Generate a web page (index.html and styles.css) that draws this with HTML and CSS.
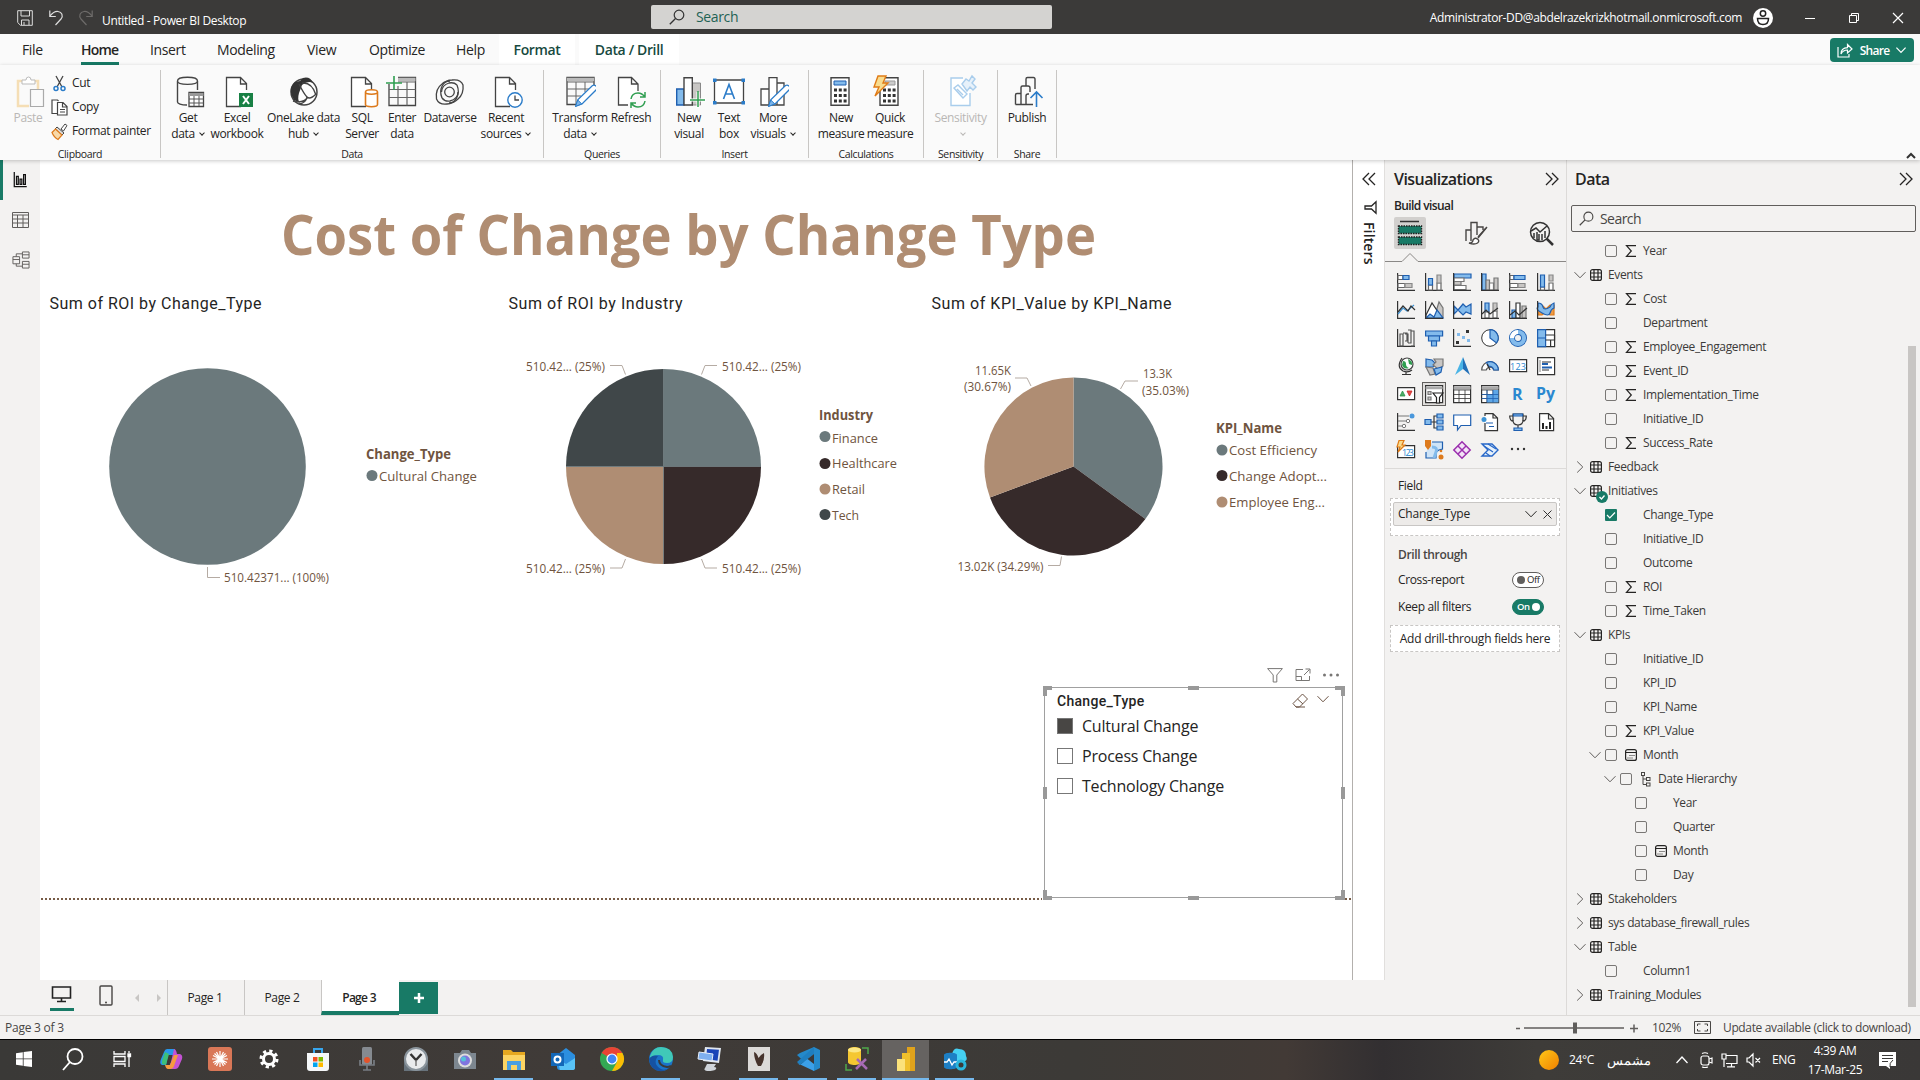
FILE: index.html
```html
<!DOCTYPE html>
<html lang="en">
<head>
<meta charset="utf-8">
<title>Untitled - Power BI Desktop</title>
<link rel="stylesheet" href="styles.css">
</head>
<body>
<svg class="defs" aria-hidden="true">
  <symbol id="chev-d" viewBox="0 0 12 12"><path d="M.5 3.2 6 8.8l5.500-5.600" fill="none" stroke="currentColor"/></symbol>
  <symbol id="chev-r" viewBox="0 0 12 12"><path d="M3.200.5 8.800 6l-5.600 5.500" fill="none" stroke="currentColor"/></symbol>
  <symbol id="dbl" viewBox="0 0 14 14"><path d="m1 1 6 6-6 6M7 1l6 6-6 6" fill="none" stroke="currentColor" stroke-width="1.300"/></symbol>
  <symbol id="lens" viewBox="0 0 16 16"><circle cx="10" cy="6" r="4.800" fill="none" stroke="currentColor" stroke-width="1.200"/><path d="M6.500 9.500.8 15.200" stroke="currentColor" stroke-width="1.300"/></symbol>
  <symbol id="tbl" viewBox="0 0 12 12"><g fill="none" stroke="#252423" stroke-width="1.200"><rect x=".6" y=".6" width="10.800" height="10.800" rx="2"/><path d="M.6 4h10.800M.6 8h10.800M4 .6v10.800M8 .6v10.800"/></g></symbol>
  <symbol id="sum" viewBox="0 0 12 12"><path d="M11 .6H1.500L6.300 6l-4.800 5.400H11" fill="none" stroke="#252423" stroke-width="1.200"/></symbol>
  <symbol id="cal" viewBox="0 0 12 12"><rect x=".6" y=".6" width="10.800" height="10.800" rx="2" fill="none" stroke="#252423" stroke-width="1.200"/><path d="M.6 3.500h10.800" stroke="#252423"/><path d="M4.500 6.500h5M2.500 9h5" stroke="#252423" stroke-dasharray="1 1"/></symbol>
  <symbol id="hier" viewBox="0 0 12 15"><g fill="none" stroke="#484644"><rect x="1.500" y=".5" width="3" height="3"/><rect x="6.500" y="5.500" width="3.500" height="3"/><rect x="6.500" y="11" width="3.500" height="3"/><path d="M3 3.500V12.500h3.500M3 7h3.500"/></g></symbol>
  <symbol id="doc" viewBox="0 0 32 32"><path d="M20 30.500H5.500v-29h14l6 6V14M19.500 1.500V8h6" fill="#fff" stroke="#444" stroke-width="1.300"/></symbol>
  <symbol id="pen" viewBox="0 0 32 32"><path d="m12 30 2-6.500L28.500 9.500q2-1 3.500.5t.5 3.500L18 28z" fill="#fff" stroke="#2b7cc9" stroke-width="1.300"/><path d="m11.500 30.500 2.200-6.500 4 3.800z" fill="#7cb5ea" stroke="#2b7cc9"/></symbol>
</svg>

<header class="titlebar">
  <div class="quick">
    <svg width="16" height="16" viewBox="0 0 16 16" fill="none" stroke="#ddd"><path d="M1 .7h14.300v14.600H3.500L.7 12.500V.7zM4 .7V6h8.500V.7M4.500 15V10h7.500v5M7 12v3"/></svg>
    <svg width="14" height="16" viewBox="0 0 14 16" fill="none" stroke="#ddd" stroke-width="1.200"><path d="M.8.5v6h6M1 6Q5 1 9 1.500c4 .5 5.500 4.500 3 7.500l-5.500 6"/></svg>
    <svg width="14" height="16" viewBox="0 0 14 16" fill="none" stroke="#6d6b69" stroke-width="1.200"><path d="M13.200.5v6h-6M13 6Q9 1 5 1.500c-4 .5-5.500 4.500-3 7.500l5.500 6"/></svg>
  </div>
  <span class="app-title">Untitled - Power BI Desktop</span>
  <div class="top-search"><svg width="16" height="16"><use href="#lens"/></svg><span>Search</span></div>
  <div class="account">
    <span class="mail">Administrator-DD@abdelrazekrizkhotmail.onmicrosoft.com</span>
    <svg width="20" height="20" viewBox="0 0 20 20"><circle cx="10" cy="10" r="10" fill="#fff"/><g fill="none" stroke="#222" stroke-width="1.500"><circle cx="10" cy="5.500" r="2.700"/><path d="M4.500 10.500h11q0 6-5.500 6t-5.500-6z"/></g></svg>
  </div>
  <div class="win">
    <svg width="12" height="12" viewBox="0 0 12 12" stroke="#fff"><path d="M1 6.500h10"/></svg>
    <svg width="12" height="12" viewBox="0 0 12 12" stroke="#fff" fill="none"><path d="M1.500 3.500h7v7h-7zM3.500 3.500v-2h7v7h-2"/></svg>
    <svg width="12" height="12" viewBox="0 0 12 12" stroke="#fff" stroke-width="1.200"><path d="m1 1 10 10M11 1 1 11"/></svg>
  </div>
</header>

<nav class="tabs">
  <span class="t-file">File</span><span class="t-home on">Home</span><span class="t-ins">Insert</span><span class="t-mod">Modeling</span><span class="t-view">View</span><span class="t-opt">Optimize</span><span class="t-help">Help</span><span class="ctx c1">Format</span><span class="ctx c2">Data / Drill</span>
  <button class="share"><svg width="16" height="15" viewBox="0 0 16 15" fill="none" stroke="#fff" stroke-width="1.200"><path d="M1 4v10h11v-3M4 11q0-6 6.500-6.300V1.500L15 6l-4.500 4V7Q6 7 4 11z"/></svg>Share<svg width="10" height="10" viewBox="0 0 12 12"><path d="M.5 3.200 6 8.800l5.500-5.600" fill="none" stroke="#fff" stroke-width="1.500"/></svg></button>
</nav>

<section class="ribbon">
  <div class="group g-clip">
    <div class="row">
      <div class="cmd paste off"><svg class="ico" viewBox="0 0 32 32"><path d="M11 5H6v25h11M22 5h4v8" fill="none" stroke="#f5deb5" stroke-width="2.500"/><path d="M10 8V4h4q0-3 2.500-3T19 4h4v4z" fill="#fff" stroke="#bbb"/><path d="M18.500 13.500h13v17h-13z" fill="#fafafa" stroke="#aaa" stroke-width="1.200"/></svg><span>Paste</span></div>
      <div class="stack">
        <div><svg width="17" height="17" viewBox="0 0 17 17" fill="none"><path d="m5 1 6 11M12 1 6 12" stroke="#444" stroke-width="1.300"/><circle cx="5" cy="13.500" r="2" stroke="#2b7cc9" stroke-width="1.500"/><circle cx="12" cy="13.500" r="2" stroke="#2b7cc9" stroke-width="1.500"/></svg>Cut</div>
        <div><svg width="17" height="17" viewBox="0 0 17 17" fill="#fff" stroke="#444" stroke-width="1.200"><path d="M6 14.500H1V1h5.500l1 1M6.500 3.500H12L16 7.500V16H6.500zM11.500 4v4H16M9 10.500h5M9 13h5"/></svg>Copy</div>
        <div><svg width="17" height="17" viewBox="0 0 17 17"><path d="m10 6 4-5 2 1.500-3.500 5.500z" fill="#fff" stroke="#444"/><path d="m6 4 7 6-2 2-7-6z" fill="#ddd" stroke="#444"/><path d="m4.500 6 6.500 6-4 4.500q-4-2-6-7z" fill="#f8d9a8" stroke="#dd7a1c" stroke-width="1.200"/></svg>Format painter</div>
      </div>
    </div>
    <footer>Clipboard</footer>
  </div>
  <div class="group g-data">
    <div class="row">
      <div class="cmd w40"><svg class="ico" viewBox="0 0 32 32"><path d="M15 29C9 29 5.500 27.500 5.500 26V5c0-5 20-5 20 0v9M5.500 5c0 4.500 20 4.500 20 0" fill="none" stroke="#444" stroke-width="1.400"/><path d="M17 16.500h14.500v14H17z" fill="#fff" stroke="#444" stroke-width="1.300"/><path d="M17 18.500h14.500" stroke="#999" stroke-width="3"/><path d="M17 23h14.500M17 27h14.500M22 20v10M27 20v10" stroke="#555"/></svg><span>Get<br>data<i class="dn"></i></span></div>
      <div class="cmd w58"><svg class="ico" viewBox="0 0 32 32"><use href="#doc"/><path d="M18 17h14v14H18z" fill="#188044"/><path d="m22 20 6 8M28 20l-6 8" stroke="#fff" stroke-width="2"/></svg><span>Excel<br>workbook</span></div>
      <div class="cmd w75"><svg class="ico" viewBox="0 0 32 32"><circle cx="16" cy="16" r="13" fill="#fff" stroke="#444" stroke-width="1.500"/><path d="M6 24Q-1 13 7 6l5-1 3-3q7-2 10 5-5-3-11 2l-3 8q-2 7 1 10z" fill="#333"/><path d="M11 8q5 10 8 13t9-3M5 25q10 3 15-4M19 21q-1 6-8 7M14 7q10-1 14 12" fill="none" stroke="#444" stroke-width="1.400"/></svg><span>OneLake data<br>hub<i class="dn"></i></span></div>
      <div class="cmd w42"><svg class="ico" viewBox="0 0 32 32"><use href="#doc"/><path d="M19.500 16v12.500c0 3 12 3 12 0V16c0-3-12-3-12 0s12 3 12 0" fill="#fff" stroke="#dd7a1c" stroke-width="1.600"/></svg><span>SQL<br>Server</span></div>
      <div class="cmd w38"><svg class="ico" viewBox="0 0 32 32"><path d="M3 8v21.500h26.500v-28H12" fill="none" stroke="#444" stroke-width="1.300"/><path d="M12 3.500h17.500" stroke="#bbb" stroke-width="3.500"/><path d="M12 6h17.500M3 13.500h26.500M3 21.500h26.500M12 10v19.500M21 6v23.500" stroke="#666" stroke-width="1.200" fill="none"/><path d="M8 0v14M0 7h16" stroke="#2f9e50" stroke-width="1.600"/></svg><span>Enter<br>data</span></div>
      <div class="cmd w58"><svg class="ico" viewBox="0 0 32 32" fill="none" stroke="#444" stroke-width="1.300"><circle cx="15.500" cy="16" r="4.800"/><path d="M8 22C4 12 10 4 18 4q9-1 11 5 1 9-5 14-4 4-9 4"/><path d="M23 9c4 10-2 19-10 19Q5 29 2.500 23 1 13 8 8q3-3 8-3"/><path d="M8 22q3 4 8 3 8-2 8-9M23 9q-3-3-8-2-7 2-7.500 9"/></svg><span>Dataverse</span></div>
      <div class="cmd w54"><svg class="ico" viewBox="0 0 32 32"><use href="#doc"/><circle cx="25" cy="24" r="7.200" fill="#fff" stroke="#2b7cc9" stroke-width="1.400"/><path d="M25 19.500V24h4" fill="none" stroke="#444" stroke-width="1.300"/></svg><span>Recent<br>sources<i class="dn"></i></span></div>
    </div>
    <footer>Data</footer>
  </div>
  <div class="group g-quer">
    <div class="row">
      <div class="cmd w54"><svg class="ico" viewBox="0 0 32 32"><path d="M13 28.500H3v-27h27V11" fill="none" stroke="#444" stroke-width="1.300"/><path d="M3 3.500h27" stroke="#bbb" stroke-width="3.500"/><path d="M3 6h27M3 13h22M3 20h14M12 6v22M21 6v10" fill="none" stroke="#666"/><use href="#pen" width="32" height="32"/></svg><span>Transform<br>data<i class="dn"></i></span></div>
      <div class="cmd w48"><svg class="ico" viewBox="0 0 32 32"><path d="M13 29H3.500V1.500h13L23 8v7M16.500 1.500V8H23" fill="#fff" stroke="#444" stroke-width="1.300"/><path d="M16 23q1-6 7-6 4 0 7 4M30 16v5h-5M30 25q-1 6-7 6-4 0-7-4M16 32v-5h5" fill="none" stroke="#2f9e50" stroke-width="1.500"/></svg><span>Refresh</span></div>
    </div>
    <footer>Queries</footer>
  </div>
  <div class="group g-ins">
    <div class="row">
      <div class="cmd w36"><svg class="ico" viewBox="0 0 32 32"><path d="M3.700 13H11v16H3.700z" fill="#83bbec" stroke="#1f5fb0" stroke-width="1.400"/><path d="M19 7h8.500v22H19z" fill="#c8c6c4" stroke="#888"/><path d="M11 1.700h8.300V29H11z" fill="#fff" stroke="#444" stroke-width="1.400"/><path d="M25 16v16M17 24h16" stroke="#fff" stroke-width="3"/><path d="M25 15v16M17 24h15" stroke="#2f9e50" stroke-width="1.500"/></svg><span>New<br>visual</span></div>
      <div class="cmd w44"><svg class="ico" viewBox="0 0 32 32"><path d="M1.500 4h29v23h-29z" fill="#fff" stroke="#444" stroke-width="1.300"/><path d="M0 2.500h3.500V6H0zM28.500 2.500H32V6h-3.500zM0 25h3.500v3.500H0zM28.500 25H32v3.500h-3.500z" fill="#2b7cc9"/><path d="M10.500 23 16 8.500 21.500 23M12.300 18h7.400" fill="none" stroke="#2b7cc9" stroke-width="1.600"/></svg><span>Text<br>box</span></div>
      <div class="cmd w44"><svg class="ico" viewBox="0 0 32 32"><path d="M4 13h8v16H4zM20 7h7v22h-7zM12 1.700h8V29h-8z" fill="#fff" stroke="#444" stroke-width="1.300"/><use href="#pen" width="32" height="32"/></svg><span>More<br>visuals<i class="dn"></i></span></div>
    </div>
    <footer>Insert</footer>
  </div>
  <div class="group g-calc">
    <div class="row">
      <div class="cmd w48"><svg class="ico" viewBox="0 0 32 32"><path d="M6 1.700h18v27.500H6z" fill="#fff" stroke="#444" stroke-width="1.400"/><path d="M9 5h12v4H9z" fill="#83bbec" stroke="#1f5fb0"/><path d="M9 14h13M9 19.500h13M9 25h13" stroke="#333" stroke-width="3" stroke-dasharray="3 1.800"/></svg><span>New<br>measure</span></div>
      <div class="cmd w50"><svg class="ico" viewBox="0 0 32 32"><path d="M6 1.700h18v27.500H6z" fill="#fff" stroke="#444" stroke-width="1.400"/><path d="M11 5h10v4H11z" fill="#ccc" stroke="#999"/><path d="M9 14h13M9 19.500h13M9 25h13" stroke="#333" stroke-width="3" stroke-dasharray="3 1.800"/><path d="M4 0h8L9 7h5L1 20l4-9H0z" fill="#f8dc8f" stroke="#e07b16" stroke-width="1.400"/></svg><span>Quick<br>measure</span></div>
    </div>
    <footer>Calculations</footer>
  </div>
  <div class="group g-sens">
    <div class="row">
      <div class="cmd w74 off"><svg class="ico" viewBox="0 0 32 32" fill="none" stroke="#a9cdec" stroke-width="1.400"><path d="M18 2H6v27.500h19V17" fill="#fff"/><path d="m9 12 4-3 9 9-4 4zM12 13l6 6"/><path d="m17 8 4-5 3 2 3-5 3 3-3 4 4 4-3 3-3-3-3 4z" fill="#e7f1fa"/></svg><span>Sensitivity<br><i class="dn"></i></span></div>
    </div>
    <footer>Sensitivity</footer>
  </div>
  <div class="group g-share">
    <div class="row">
      <div class="cmd w60"><svg class="ico" viewBox="0 0 32 32" fill="none" stroke="#444" stroke-width="1.400"><path d="M24 13V3q0-1.500-1.500-1.500h-6Q15 1.500 15 3v7M4.500 28.500V19q0-1.500 1.500-1.500h4M4.500 28.500H22M10 28V11.500q0-1.500 1.500-1.500H17q2 0 2 2v4M15 28v-8q0-2 2-2h1"/><path d="M25.500 31V16M19.500 22l6-6 6 6" stroke="#2b7cc9" stroke-width="1.600"/></svg><span>Publish</span></div>
    </div>
    <footer>Share</footer>
  </div>
  <svg class="collapse" width="10" height="8" viewBox="0 0 10 8"><path d="m1 6 4-4 4 4" fill="none" stroke="#333" stroke-width="2"/></svg>
</section>

<main class="work">
  <div class="left">
    <div class="top">
      <aside class="views">
        <span class="v on"><svg width="15" height="16" viewBox="0 0 16 18" fill="none" stroke="#111" stroke-width="1.400"><path d="M1 0v16.500h14M3.500 5h2v9h-2zM7.500 8h2v6h-2zM11.500 3h2v11h-2z"/></svg></span>
        <span class="v"><svg width="17" height="16" viewBox="0 0 17 16" fill="none" stroke="#605e5c"><path d="M.5.5h16v15H.5zM.5 3h16M.5 7h16M.5 11h16M5.500 3v12.500M11 3v12.500"/></svg></span>
        <span class="v"><svg width="18" height="18" viewBox="0 0 18 19" fill="none" stroke="#605e5c"><path d="M.5 6h7v7.500h-7zM.5 9h7M10.500 1h7v6.500h-7zM10.500 4h7M10.500 11h7v7h-7zM10.500 14h7M4 6V3h6.500M4 13.500V16h6.500"/></svg></span>
      </aside>
      <section class="canvas">
        <h1><svg width="830" height="80" viewBox="0 0 830 80"><text x="0" y="55" textLength="815" lengthAdjust="spacingAndGlyphs">Cost of Change by Change Type</text></svg></h1>
        <div class="charts">
          <svg width="460" height="320" viewBox="40 285 460 320">
            <text class="ct" x="49.500" y="309" textLength="212">Sum of ROI by Change_Type</text>
            <circle cx="207.500" cy="466.500" r="98.300" fill="#6b797c"/>
            <path class="lead" d="M207.500 567v10.500H220"/>
            <text x="224" y="582" textLength="105" lengthAdjust="spacingAndGlyphs">510.42371... (100%)</text>
            <text class="lt" x="366" y="459" textLength="85" lengthAdjust="spacingAndGlyphs">Change_Type</text>
            <circle cx="372" cy="475.500" r="5.500" fill="#6b797c"/><text class="li" x="379" y="481" textLength="98" lengthAdjust="spacingAndGlyphs">Cultural Change</text>
          </svg>
          <svg width="425" height="320" viewBox="500 285 425 320">
            <text class="ct" x="508.500" y="309" textLength="174">Sum of ROI by Industry</text>
            <path d="M663.500 466.500V369a97.500 97.500 0 0 1 97.500 97.500z" fill="#6b797c"/>
            <path d="M663.500 466.500H761a97.500 97.500 0 0 1-97.500 97.500z" fill="#362a2a"/>
            <path d="M663.500 466.500V564a97.500 97.500 0 0 1-97.500-97.500z" fill="#af8d73"/>
            <path d="M663.500 466.500H566a97.500 97.500 0 0 1 97.500-97.500z" fill="#404749"/>
            <path d="M566 466.500h195M663.500 369v195" stroke="#6b797c" stroke-width=".8"/>
            <path class="lead" d="M610 365.500h12l3.500 9M717 365.500h-12l-3.500 9M610 568h12l3.500-9M717 568h-12l-3.500-9"/>
            <text x="526" y="371" textLength="79" lengthAdjust="spacingAndGlyphs">510.42... (25%)</text>
            <text x="722" y="371" textLength="79" lengthAdjust="spacingAndGlyphs">510.42... (25%)</text>
            <text x="526" y="573" textLength="79" lengthAdjust="spacingAndGlyphs">510.42... (25%)</text>
            <text x="722" y="573" textLength="79" lengthAdjust="spacingAndGlyphs">510.42... (25%)</text>
            <text class="lt" x="819" y="420" textLength="54" lengthAdjust="spacingAndGlyphs">Industry</text>
            <circle cx="825" cy="436.500" r="5.500" fill="#6b797c"/><text class="li" x="832" y="443" textLength="46" lengthAdjust="spacingAndGlyphs">Finance</text>
            <circle cx="825" cy="463.500" r="5.500" fill="#362a2a"/><text class="li" x="832" y="468" textLength="65" lengthAdjust="spacingAndGlyphs">Healthcare</text>
            <circle cx="825" cy="489" r="5.500" fill="#af8d73"/><text class="li" x="832" y="494" textLength="33" lengthAdjust="spacingAndGlyphs">Retail</text>
            <circle cx="825" cy="514.500" r="5.500" fill="#404749"/><text class="li" x="832" y="520" textLength="27" lengthAdjust="spacingAndGlyphs">Tech</text>
          </svg>
          <svg width="427" height="320" viewBox="925 285 427 320">
            <text class="ct" x="931.500" y="309" textLength="240">Sum of KPI_Value by KPI_Name</text>
            <path d="M1073.500 466.500V377.500A89 89 0 0 1 1145.400 519z" fill="#6b797c"/>
            <path d="M1073.500 466.500 1145.400 519A89 89 0 0 1 990 497.500z" fill="#362a2a"/>
            <path d="M1073.500 466.500 990 497.500A89 89 0 0 1 1073.500 377.500z" fill="#af8d73"/>
            <path class="lead" d="M1015 378h12l4 8M1138 381h-13l-4.500 8M1048 565.500h12l1.500-9"/>
            <text x="975" y="375" textLength="36" lengthAdjust="spacingAndGlyphs">11.65K</text>
            <text x="964" y="391" textLength="47" lengthAdjust="spacingAndGlyphs">(30.67%)</text>
            <text x="1143" y="378" textLength="29" lengthAdjust="spacingAndGlyphs">13.3K</text>
            <text x="1142" y="395" textLength="47" lengthAdjust="spacingAndGlyphs">(35.03%)</text>
            <text x="957.500" y="571" textLength="86" lengthAdjust="spacingAndGlyphs">13.02K (34.29%)</text>
            <text class="lt" x="1216" y="433" textLength="66" lengthAdjust="spacingAndGlyphs">KPI_Name</text>
            <circle cx="1222" cy="450" r="5.500" fill="#6b797c"/><text class="li" x="1229" y="455" textLength="88" lengthAdjust="spacingAndGlyphs">Cost Efficiency</text>
            <circle cx="1222" cy="475.500" r="5.500" fill="#362a2a"/><text class="li" x="1229" y="481" textLength="98" lengthAdjust="spacingAndGlyphs">Change Adopt...</text>
            <circle cx="1222" cy="502" r="5.500" fill="#af8d73"/><text class="li" x="1229" y="507" textLength="96" lengthAdjust="spacingAndGlyphs">Employee Eng...</text>
          </svg>
        </div>
        <div class="page-edge"></div>
        <div class="slicer">
          <div class="vis-tools">
            <svg width="16" height="15" viewBox="0 0 16 15"><path d="M.6.6h14.800L9.800 7v7H6.200V7z"/></svg>
            <svg width="16" height="14" viewBox="0 0 16 14"><path d="M8 1.500H1v11h13.500V8M1 8.500h5.500v4M9 7l5.500-5.500M10.500 1h4.500v4.500"/></svg>
            <svg width="16" height="14" viewBox="0 0 16 14" class="dots"><circle cx="1.500" cy="7" r="1.500"/><circle cx="8" cy="7" r="1.500"/><circle cx="14.500" cy="7" r="1.500"/></svg>
          </div>
          <svg class="handles" width="303" height="214" viewBox="0 0 303 214"><path d="M2.500 1.500h298v210H2.500z" fill="none" stroke="#a0a0a0"/><path d="M10 2H3v8M293 2h8v8M10 212H3v-8M293 212h8v-8M146 2h11M146 212h11M3 101v12M301 101v12" fill="none" stroke="#999" stroke-width="4"/></svg>
          <div class="sl-head"><b>Change_Type</b>
            <svg width="17" height="15" viewBox="0 0 17 15" fill="none" stroke="#6b5344"><path d="M1 10.500 10.500 1 15.500 6 7.500 14H4zM5.500 6l5.500 5M4 14h9"/></svg>
            <svg width="12" height="12" class="slc"><use href="#chev-d"/></svg>
          </div>
          <div class="sl-row"><i class="full"></i>Cultural Change</div>
          <div class="sl-row"><i></i>Process Change</div>
          <div class="sl-row"><i></i>Technology Change</div>
        </div>
      </section>
      <aside class="filters">
        <svg width="14" height="14" class="flip"><use href="#dbl"/></svg>
        <svg width="13" height="13" viewBox="0 0 13 13"><path d="M12 .8v11.400L7.500 8H1V5h6.500z" fill="none" stroke="#252423" stroke-width="1.300"/></svg>
        <b>Filters</b>
      </aside>
    </div>
    <div class="pages">
      <span class="desk"><svg width="22" height="18" viewBox="0 0 22 18"><path d="M1.500 1h18v11h-18zM10.500 12v3M6 15.500h9" fill="none" stroke="#222" stroke-width="1.600"/></svg></span>
      <svg class="phone" width="14" height="21" viewBox="0 0 14 21"><rect x="1" y="1" width="12" height="19" rx="1" fill="none" stroke="#484644" stroke-width="1.400"/><circle cx="7" cy="17.500" r="1" fill="#484644"/></svg>
      <svg class="arrows" width="32" height="10" viewBox="0 0 32 10" fill="#c8c6c4"><path d="M5 1v8L1 5zM23 1v8l4-4z"/></svg>
      <span class="pg">Page 1</span><span class="pg">Page 2</span><span class="pg on">Page 3</span>
      <span class="plus"><svg width="12" height="12"><path d="M6 1v10M1 6h10" stroke="#fff" stroke-width="2.500"/></svg></span>
    </div>
  </div>

  <aside class="viz">
    <h2>Visualizations<svg width="14" height="14"><use href="#dbl"/></svg></h2>
    <h3>Build visual</h3>
    <div class="modes">
      <span class="m on"><svg width="26" height="26" viewBox="0 0 26 26"><path d="M3 1.500h19" stroke="#333" stroke-width="1.500"/><path d="M1.500 6h23v7.500h-23zM1.500 17h23v7.500h-23z" fill="#187a66"/><path d="M1.500 6h23v7.500h-23zM1.500 17h23v7.500h-23z" fill="none" stroke="#222" stroke-width="1.400" stroke-dasharray="1.500 1"/></svg></span>
      <span class="m"><svg width="24" height="24" viewBox="0 0 24 24" fill="none" stroke="#484644" stroke-width="1.400"><path d="M2 20V9h5v11M7 9V1.500h6V14M13 6h6v3M23 6 14 17"/><path d="m22 7-8 9M5 22q4 0 4-3 2-3 4.500-1t0 4q-3 2-8.500 0z" fill="#fff"/></svg></span>
      <span class="m"><svg width="25" height="25" viewBox="0 0 25 25" fill="none" stroke="#333" stroke-width="1.500"><circle cx="11" cy="11" r="9.500"/><path d="m17.500 17.500 6.500 6.500" stroke-width="2.500"/><path d="m2 10 5-3 4 4 7-6M5 12v5M8 11v8h2v-6M13 13v6M16 10v7"/></svg></span>
    </div>
    <svg class="notch" width="181" height="10" viewBox="0 0 181 10"><path d="M0 9.500h17L25 1.500l8 8h148" fill="none" stroke="#8a8886"/></svg>
    <div class="gallery" id="gallery"></div>
    <div class="wells">
      <label>Field</label>
      <div class="drop"><div class="chip">Change_Type<svg width="12" height="12"><use href="#chev-d"/></svg><svg width="9" height="9" viewBox="0 0 9 9"><path d="m.5.5 8 8M8.500.5l-8 8" stroke="#333"/></svg></div></div>
      <label class="dt">Drill through</label>
      <div class="opt">Cross-report<span class="tog"><i></i>Off</span></div>
      <div class="opt">Keep all filters<span class="tog on">On<i></i></span></div>
      <div class="add">Add drill-through fields here</div>
    </div>
  </aside>

  <aside class="data">
    <h2>Data<svg width="14" height="14"><use href="#dbl"/></svg></h2>
    <div class="dsearch"><svg width="15" height="15" viewBox="0 0 16 16"><use href="#lens"/></svg>Search</div>
    <div class="tree" id="tree"></div>
    <div class="thumb"></div>
  </aside>
</main>

<div class="status">
  <span class="pn">Page 3 of 3</span>
  <svg width="130" height="14" viewBox="0 0 130 14"><path d="M1 7.500h4M9 7h100M115 7.500h8M119 3.500v8" stroke="#605e5c" stroke-width="1.500"/><path d="M58 1.500h4v11h-4z" fill="#605e5c"/></svg>
  <span class="pct">102%</span>
  <svg width="17" height="13" viewBox="0 0 17 13" fill="none" stroke="#484644"><path d="M.5.5h16v12H.5zM3.500 5V3h3M10.500 3h3v2M3.500 8v2h3M10.500 10h3V8"/></svg>
  <span class="upd">Update available (click to download)</span>
</div>

<footer class="taskbar">
  <div class="apps">
    <span><svg viewBox="0 0 24 24" fill="#fff"><path d="M4 6.200l6.800-1v6.300H4zM11.600 5 20 4v7.500h-8.400zM4 12.300h6.800v6.400L4 17.800zM11.600 12.300H20V20l-8.400-1.100z"/></svg></span>
    <span><svg viewBox="0 0 24 24" fill="none" stroke="#fff" stroke-width="1.800"><circle cx="14" cy="9.500" r="7.500"/><path d="m9 15-7 8"/></svg></span>
    <span><svg viewBox="0 0 24 24" fill="none" stroke="#fff" stroke-width="1.300"><path d="M4 4v3h11V4M4 20v-3h11v3M4 9.500h11v5H4zM19 4v2M19 10v10"/><path d="M18 7h2.500v2.500H18z" fill="#fff"/></svg></span>
    <span><svg viewBox="0 0 24 24"><path d="M8 2h7l2 6H9L7 18H3q-3-1-1-6L5 5q1-3 3-3z" fill="#2797ea"/><path d="M3 14 6 5l4 2-3 11-4-1z" fill="#3dbf79"/><path d="M15 2q2 0 3 5h3q3 1 2 5l-3 7q-1 3-4 3H9l3-7z" fill="#c452d4"/><path d="M9 22q-2 0-3-4h5l4-10h4l-4 11q-1 3-4 3z" fill="#f69b3f"/></svg></span>
    <span><svg viewBox="0 0 24 24"><rect width="24" height="24" rx="3" fill="#d97757"/><path d="M12 4v16M4 12h16M6.500 6.500l11 11M17.500 6.500l-11 11M8.500 5l7 14M15.500 5l-7 14M5 8.500l14 7M5 15.500l14-7" stroke="#fff" stroke-width="1.200"/></svg></span>
    <span><svg viewBox="0 0 24 24" fill="none" stroke="#fff"><circle cx="12" cy="12" r="5.500" stroke-width="3"/><circle cx="12" cy="12" r="8" stroke-width="3" stroke-dasharray="3.200 3.080"/></svg></span>
    <span><svg viewBox="0 0 24 24"><path d="M8 6V2h8v4" fill="none" stroke="#38a6ee" stroke-width="2"/><path d="M1 6h22v15q0 3-3 3H4q-3 0-3-3z" fill="#f5f7f9"/><path d="M7 10h4.500v4.500H7z" fill="#f25022"/><path d="M12.500 10H17v4.500h-4.500z" fill="#7fba00"/><path d="M7 15.500h4.500V20H7z" fill="#00a4ef"/><path d="M12.500 15.500H17V20h-4.500z" fill="#ffb900"/></svg></span>
    <span><svg viewBox="0 0 24 24"><rect x="7" y="0" width="10" height="18" rx="1.500" fill="#858a90"/><path d="M5 13v5h14v-5M12 18v5M8 23h8" fill="none" stroke="#777c82" stroke-width="1.700"/><circle cx="12" cy="13" r="3" fill="#e4532a"/></svg></span>
    <span><svg viewBox="0 0 24 24"><path d="M0 13h24v11H0z" fill="#68737c"/><circle cx="12" cy="12" r="11" fill="#e9ebed" stroke="#8a949c" stroke-width="2"/><path d="m6.500 7 5.500 6 5.500-6" fill="none" stroke="#333" stroke-width="2.500"/><path d="M12 13v6" stroke="#777" stroke-width="1.500"/></svg></span>
    <span><svg viewBox="0 0 24 24"><path d="M1 6h6l2-3h7l2 3h5v16H1z" fill="#7d8790"/><circle cx="12" cy="13.500" r="7" fill="#ddd"/><circle cx="12" cy="13.500" r="5" fill="#8074df"/><circle cx="10.500" cy="12" r="2.500" fill="#55c1d8"/></svg></span>
    <span class="run"><svg viewBox="0 0 24 24"><path d="M1 3h8l2 2h12v18H1z" fill="#e6a820"/><path d="M1 8h22v15H1z" fill="#fcd462"/><path d="M5 23v-9h14v9h-4v-5H9v5z" fill="#4b9fe0"/></svg></span>
    <span><svg viewBox="0 0 24 24"><path d="m6 8 9-7 9 7v12q0 3-3 3H9q-3 0-3-3z" fill="#2b8fe0"/><path d="m6 11 9 6 9-6v10q0 2-3 2H9z" fill="#59c3f7"/><path d="M0 6h13v13H0z" fill="#1267b8"/><circle cx="6.500" cy="12.500" r="3" fill="none" stroke="#fff" stroke-width="2"/></svg></span>
    <span><svg viewBox="0 0 24 24"><circle cx="12" cy="12" r="12" fill="#34a853"/><path d="M12 12 1.600 6A12 12 0 0 1 22.400 6z" fill="#ea4335"/><path d="M22.400 6A12 12 0 0 1 12 24l5-9V6z" fill="#fbbc04"/><circle cx="12" cy="12" r="5.600" fill="#fff"/><circle cx="12" cy="12" r="4.400" fill="#4285f4"/></svg></span>
    <span class="run"><svg viewBox="0 0 24 24"><circle cx="12" cy="12" r="12" fill="#1b74c9"/><path d="M1 9Q4 0 12 0q11 0 12 10 0 6-6 6-5 0-4-3 1-5-5-5-4 0-8 4z" fill="#40c8b8"/><path d="M9 9q-6 8 3 13 4 2 9-2-5 5-11 4Q1 22 0 12q3-5 9-3z" fill="#1552a2"/><path d="M10 13q0 6 8 7 2 0 4-1" fill="none" stroke="#3b3a39" stroke-width="2"/></svg></span>
    <span><svg viewBox="0 0 24 24"><path d="m7 0 16 1-2 15-16-2z" fill="#dfe6ef"/><path d="m9 2 12 .8-1.500 11L8 12z" fill="#1b45b8"/><path d="m1 5 14 2-1 7-14-2z" fill="#7fb0f0" stroke="#e8eef8"/><path d="M9 17h9l-2 3q3 0 2 2t-9 2q-4-1-2-3z" fill="#cfd4da"/></svg></span>
    <span class="run"><svg viewBox="0 0 24 24"><path d="M1 0h22v24H1z" fill="#dcdad8"/><path d="M7 5q3 1 4.500 6L14 8l3-2q1 7-3 13h-3Q7 12 7 5z" fill="#46332c"/></svg></span>
    <span class="run"><svg viewBox="0 0 24 24"><path d="m18 0 6 3v18l-6 3L1 8l3-2z" fill="#2489ca"/><path d="M18 0v24L1 16l3 2L18 6z" fill="#3ba0e8"/><path d="M18 0 1 15l3 3L18 7z" fill="#1f7fc0"/><path d="M18 7v10l-6.500-5z" fill="#3a3837"/></svg></span>
    <span class="run"><svg viewBox="0 0 24 24"><path d="M3 3c0-4 13-4 13 0v12c0 4-13 4-13 0z" fill="#f5c731"/><ellipse cx="9.500" cy="3" rx="6.500" ry="2.500" fill="#fce785"/><path d="M17 1h6v6M1 17v6h6" fill="none" stroke="#4fa84b" stroke-width="1.500"/><path d="m12 12 10 10M21 12 11 22" stroke="#a76bb5" stroke-width="2.500"/></svg></span>
    <span class="run act"><svg viewBox="0 0 24 24"><path d="M13 0h8v24h-8z" fill="#e0a21b"/><path d="M8 6h8v18H8z" fill="#f0c02c"/><path d="M3 12h8v12H3z" fill="#fbe27a"/></svg></span>
    <span class="run"><svg viewBox="0 0 24 24"><path d="M9 7Q11 0 16 2q7 0 7 7 3 5-4 6h-6z" fill="#45d0f2"/><path d="M1 8c0-3 13-3 13 0v12c0 3-13 3-13 0z" fill="#1d7fc4"/><path d="M1 15h3l2-3 3 6 2-3h3" fill="none" stroke="#fff" stroke-width="1.300"/><circle cx="18" cy="18" r="4" fill="none" stroke="#2ab7dd" stroke-width="3"/></svg></span>
  </div>
  <div class="tray">
    <svg width="20" height="20"><defs><linearGradient id="sun" x2="1" y2="1"><stop stop-color="#ffc818"/><stop offset="1" stop-color="#f08000"/></linearGradient></defs><circle cx="10" cy="10" r="10" fill="url(#sun)"/></svg>
    <span class="temp">24°C</span><span class="ar" lang="ar">مشمس</span>
    <svg class="k1" width="12" height="12" viewBox="0 0 12 12"><path d="m.5 9 5.500-6 5.500 6" fill="none" stroke="#fff" stroke-width="1.300"/></svg>
    <svg class="k2" width="13" height="16" viewBox="0 0 13 16" fill="none" stroke="#fff" stroke-width="1.200"><rect x="1" y="4" width="8" height="9" rx="2"/><path d="m9 7 3-1v5l-3-1M2 1.500q3-1.500 6 0M2 15q3 1 6 0"/></svg>
    <svg class="k3" width="17" height="15" viewBox="0 0 17 15" fill="none" stroke="#fff" stroke-width="1.200"><path d="M5 2.500h11v8H5M10.500 10.500v3M6 13.800h8M1 1h4v5H1zM3 6v8"/></svg>
    <svg class="k4" width="15" height="14" viewBox="0 0 15 14" fill="none" stroke="#fff" stroke-width="1.200"><path d="M1 5h2l4-4v12L3 9H1zM9.500 5l4.500 4.500M14 5 9.500 9.500"/></svg>
    <span class="eng">ENG</span>
    <span class="clock">4:39 AM<br>17-Mar-25</span>
    <svg class="k5" width="17" height="17" viewBox="0 0 17 17"><path d="M0 0h17v14h-6v3l-4-3H0z" fill="#fff"/><path d="M3 3.500h11M3 6.500h11M3 9.500h6" stroke="#3b3a39" stroke-width="1.200"/><path d="M11 15q-1-4 3-7" stroke="#3b3a39" fill="none"/></svg>
  </div>
</footer>
<script src="script.js"></script>
</body>
</html>
```
FILE: styles.css
```css
* { box-sizing: border-box; }
body {
  margin: 0; width: 1920px; height: 1080px; overflow: hidden;
  display: flex; flex-direction: column;
  font: 12px/16px "Open Sans", "Noto Sans", sans-serif;
  letter-spacing: -0.03em; color: #252423; background: #f3f2f1;
}
svg { display: block; flex: none; overflow: visible; }
.defs { position: absolute; width: 0; height: 0; }
h1, h2, h3 { margin: 0; }

.titlebar { flex: none; height: 34px; background: #3b3a39; color: #fff; display: flex; align-items: center; }
.quick { display: flex; gap: 16px; padding: 1px 9px 0 17px; }
.app-title { width: 549px; padding-top: 7px; white-space: nowrap; }
.top-search { flex: none; width: 401px; height: 24px; margin-top: -1px; background: #d4d3d1; border-radius: 2px; display: flex; align-items: center; gap: 11px; padding-left: 18px; color: #1f6254; font-size: 14px; }
.top-search svg { color: #333; }
.account { display: flex; align-items: center; justify-content: flex-end; gap: 11px; width: 721px; padding-top: 1px; }
.win { display: flex; gap: 32px; padding: 1px 0 0 31px; }

.tabs { flex: none; height: 31px; background: #fafafa; display: flex; font-size: 14px; line-height: 32px; white-space: nowrap; }
.tabs > span { flex: none; }
.t-file { width: 59px; margin-left: 22px; }
.t-home { width: 38px; margin-right: 31px; font-weight: 600; border-bottom: 3px solid #187a66; letter-spacing: -.06em; }
.t-ins { width: 67px; }
.t-mod { width: 90px; }
.t-view { width: 62px; }
.t-opt { width: 87px; }
.t-help { width: 43px; }
.ctx { background: #fff; font-weight: 600; color: #174a40; text-align: center; }
.c1 { width: 76px; margin-right: 4px; }
.c2 { width: 100px; }
.share { margin: 4px 6px 0 auto; width: 84px; height: 24px; border: 0; border-radius: 4px; background: #187a66; color: #fff; font: 600 12px "Open Sans", sans-serif; letter-spacing: -.06em; display: flex; align-items: center; padding: 0 8px 0 7px; justify-content: space-between; }

.ribbon { flex: none; height: 95px; background: #fafafa; display: flex; padding-top: 5px; position: relative; z-index: 2; box-shadow: 0 1px 4px rgba(0,0,0,.22); }
.group { height: 88px; border-right: 1px solid #c8c6c4; display: flex; flex-direction: column; justify-content: space-between; }
.group footer { text-align: center; font-size: 10.500px; line-height: 12px; height: 10px; }
.row { display: flex; justify-content: center; padding-top: 6px; }
.g-clip { width: 161px; } .g-data { width: 383px; } .g-quer { width: 117px; } .g-ins { width: 148px; }
.g-calc { width: 115px; } .g-sens { width: 74px; } .g-share { width: 59px; }
.g-data .row { justify-content: flex-start; padding-left: 7px; }
.g-quer .row { justify-content: flex-start; padding-left: 9px; }
.g-ins .row { justify-content: flex-start; padding-left: 10px; }
.cmd { flex: none; display: flex; flex-direction: column; align-items: center; gap: 2px; text-align: center; white-space: nowrap; }
.ico { width: 32px; height: 32px; }
.cmd.off { color: #b9b7b5; }
.w36 { width: 36px; } .w38 { width: 38px; } .w40 { width: 40px; } .w42 { width: 42px; } .w44 { width: 44px; }
.w48 { width: 48px; } .w50 { width: 50px; } .w54 { width: 54px; } .w58 { width: 58px; } .w60 { width: 60px; }
.w74 { width: 74px; } .w75 { width: 75px; }
.dn { display: inline-block; width: 4px; height: 4px; margin: 0 1px 3px 5px; border: solid currentColor; border-width: 0 1.500px 1.500px 0; transform: rotate(45deg); }
.g-clip .row { justify-content: flex-start; }
.paste { width: 50px; padding-left: 6px; }
.stack { display: flex; flex-direction: column; gap: 8px; margin-top: -1px; }
.stack div { display: flex; align-items: center; gap: 4px; height: 16px; padding-left: 1px; white-space: nowrap; }
.collapse { margin: 82px 4px 0 auto; }

.work { flex: none; height: 855px; display: flex; }
.left { width: 1385px; display: flex; flex-direction: column; }
.top { height: 820px; display: flex; }
.views { width: 40px; background: #f3f2f1; }
.v { display: flex; height: 40px; align-items: center; justify-content: center; border-left: 3px solid transparent; padding-right: 2px; }
.v.on { border-color: #187a66; }
.canvas { width: 1313px; background: #fff; position: relative; border-right: 1px solid #b3b0ad; }
h1 { height: 125px; padding: 40px 0 0 241px; }
h1 text { font: 700 56px "Open Sans", sans-serif; fill: #b08d72; letter-spacing: 0; }
.charts { display: flex; height: 320px; }
.charts text { font: 12px "Open Sans", sans-serif; fill: #6f5440; letter-spacing: 0; }
.charts .ct { font: 16px Roboto, sans-serif; fill: #252423; }
.charts .lt { font-weight: 700; font-size: 13.300px; }
.charts .li { font-size: 13.300px; }
.lead { fill: none; stroke: #b5aba3; }
.page-edge { margin: 293px 0 0 1px; height: 2px; background: repeating-linear-gradient(90deg, #775b46 0 2px, transparent 2px 4px); }
.slicer { position: absolute; left: 1002px; top: 526px; width: 303px; height: 214px; padding: 7px 14px 6px 15px; background: #fff; }
.handles { position: absolute; left: 0; top: 0; }
.vis-tools { position: absolute; right: 6px; top: -18px; display: flex; gap: 12px; fill: none; stroke: #797775; }
.vis-tools .dots { fill: #797775; stroke: none; }
.sl-head { display: flex; align-items: flex-start; font: 500 14px/16px Roboto, sans-serif; letter-spacing: .3px; height: 18px; }
.sl-head b { font-weight: 500; flex: 1; }
.slc { margin: 0 2px 0 8px; color: #6b5344; }
.sl-row { height: 30px; display: flex; align-items: center; gap: 9px; font-size: 16px; letter-spacing: -.013em; color: #252423; }
.sl-row i { width: 16px; height: 16px; border: 1px solid #777; }
.sl-row .full { background: #484644; }
.filters { width: 32px; background: #fff; display: flex; flex-direction: column; align-items: center; padding: 12px 0 0 1px; border-right: 1px solid #e1dfdd; }
.flip { transform: scaleX(-1); }
.filters svg + svg { margin: 15px 0 8px 2px; }
.filters b { writing-mode: vertical-rl; font-size: 14px; font-weight: 600; letter-spacing: .01em; }
.pages { height: 35px; display: flex; align-items: stretch; }
.desk { width: 24px; margin: 6px 25px 4px 50px; border-bottom: 3px solid #187a66; }
.desk svg { margin-left: 1px; }
.phone { margin-top: 5px; }
.arrows { margin: 13px 0 0 21px; }
.pg { width: 77px; border-left: 1px solid #c8c6c4; text-align: center; line-height: 36px; padding-right: 2px; }
.arrows + .pg { margin-left: 1px; }
.pg.on { width: 78px; background: #fff; border-bottom: 4px solid #187a66; font-weight: 600; letter-spacing: -.06em; padding-right: 3px; }
.plus { margin: 2px 0 1px; width: 39px; background: #187a66; display: flex; align-items: center; justify-content: center; }

.viz { width: 182px; border-right: 1px solid #dcdad8; }
h2 { display: flex; justify-content: space-between; align-items: center; font-size: 16px; font-weight: 600; line-height: 24px; padding: 7px 7px 0 9px; letter-spacing: -.035em; }
h3 { font-size: 12px; font-weight: 600; padding: 7px 0 0 9px; letter-spacing: -.05em; }
.modes { display: flex; justify-content: space-between; padding: 3px 9px 0; }
.m { width: 32px; height: 32px; display: flex; align-items: center; justify-content: center; border-radius: 2px; }
.m.on { background: #d2d0ce; }
.notch { margin-top: 3px; }
.gallery { display: grid; grid-template-columns: repeat(6, 28px); grid-auto-rows: 28px; padding: 6px 0 0 7px; height: 207px; border-bottom: 1px solid #dcdad8; }
.gallery span { display: flex; align-items: center; justify-content: center; }
.gallery .sel { background: #e1dfdd; border: 1px solid #605e5c; margin: 2px; }
.gallery svg { width: 18px; height: 18px; }
.gallery text { font: 700 16px "Open Sans", sans-serif; fill: #2b88d0; letter-spacing: 0; }
.gallery .num { font-size: 9px; font-weight: 400; }
.wells { padding: 9px 6px 0 5px; }
.wells label { display: block; padding-left: 8px; }
.drop { margin-top: 4px; height: 38px; border: 1px dashed #c8c6c4; background: #fff; padding: 3px 2px; }
.chip { height: 24px; border: 1px solid #c8c6c4; background: #edebe9; border-radius: 2px; display: flex; align-items: center; padding: 0 4px; gap: 6px; letter-spacing: -.2px; font-size: 12px; }
.chip svg:first-of-type { margin-left: auto; }
.wells .dt { font-weight: 600; color: #484644; margin: 11px 0 4px; }
.opt { display: flex; align-items: center; justify-content: space-between; height: 27px; margin-top: -1px; padding: 0 16px 0 8px; }
.opt + .opt { margin-top: 0; }
.tog { width: 32px; height: 16px; border: 1px solid #605e5c; border-radius: 8px; background: #fff; display: flex; align-items: center; gap: 2px; padding-left: 4px; font-size: 9.500px; }
.tog i { width: 8px; height: 8px; border-radius: 50%; background: #605e5c; }
.tog.on { background: #187a66; border-color: #187a66; color: #fff; font-weight: 600; }
.tog.on i { background: #fff; }
.add { margin-top: 5px; height: 27px; border: 1px dashed #c8c6c4; background: #fff; text-align: center; line-height: 25px; white-space: nowrap; letter-spacing: -.02em; }

.data { width: 353px; position: relative; }
.data h2 { padding-left: 8px; }
.dsearch { margin: 14px 4px 0; height: 27px; border: 1px solid #605e5c; border-radius: 2px; display: flex; align-items: center; gap: 6px; padding-left: 7px; font-size: 14px; color: #484644; letter-spacing: -.04em; }
.tree { padding-top: 7px; }
.node { height: 24px; display: flex; align-items: center; color: #3b3a39; }
.node > * { flex: none; }
.node .cv { width: 12px; margin-right: 4px; color: #605e5c; }
.node .tb { position: relative; width: 12px; margin-right: 6px; }
.node .ck { width: 12px; height: 12px; border: 1px solid #797775; border-radius: 2px; margin-right: 8px; }
.node .ck.y { border: 0; }
.node .ic { width: 12px; margin-right: 6px; display: flex; }
.node .badge { position: absolute; left: 6px; top: 6px; }
.thumb { position: absolute; right: 4px; top: 186px; width: 8px; height: 661px; background: #c8c6c4; }

.status { flex: none; height: 24px; border-top: 1px solid #dcdad8; display: flex; align-items: center; color: #484644; padding: 0 5px; }
.pn { width: 1510px; letter-spacing: -.02em; }
.pct { margin: 0 11px 0 7px; width: 31px; }
.upd { margin-left: 12px; white-space: nowrap; }

.taskbar { flex: none; height: 41px; border-top: 1px solid #000; background: linear-gradient(90deg, #3a3937, #403b38 30%, #3c3a37 56%, #423a36 67%, #322f31 72%, #3e3c39 80%, #3a3837); display: flex; color: #fff; }
.apps { flex: none; display: flex; width: 985px; }
.apps span { flex: none; width: 39px; margin: 0 5px; display: flex; align-items: center; justify-content: center; border-bottom: 2px solid transparent; }
.apps span:first-child { margin-left: 4px; }
.apps svg { width: 24px; height: 24px; }
.apps .run { border-color: #76b9ed; }
.apps .act { width: 47px; margin: 0 1px; background: #666361; }
.tray { display: flex; align-items: center; flex: 1; padding-left: 554px; }
.temp { margin-left: 10px; width: 38px; }
.ar { width: 44px; font-size: 13px; letter-spacing: 0; direction: rtl; }
.k1 { margin-left: 25px; } .k2 { margin-left: 12px; } .k3 { margin-left: 8px; } .k4 { margin-left: 8px; }
.eng { margin-left: 11px; width: 26px; }
.clock { width: 74px; text-align: center; line-height: 19px; }
.k5 { margin-left: 7px; }
```
FILE: script.js
```js
// Field list: [level, kind, label, icon, state]
const nodes = [
  [1, 'f', 'Year', 'sum'], [0, 't', 'Events', 'd'], [1, 'f', 'Cost', 'sum'], [1, 'f', 'Department'],
  [1, 'f', 'Employee_Engagement', 'sum'], [1, 'f', 'Event_ID', 'sum'], [1, 'f', 'Implementation_Time', 'sum'],
  [1, 'f', 'Initiative_ID'], [1, 'f', 'Success_Rate', 'sum'], [0, 't', 'Feedback', 'r'],
  [0, 't', 'Initiatives', 'd', 1], [1, 'f', 'Change_Type', '', 1], [1, 'f', 'Initiative_ID'], [1, 'f', 'Outcome'],
  [1, 'f', 'ROI', 'sum'], [1, 'f', 'Time_Taken', 'sum'], [0, 't', 'KPIs', 'd'], [1, 'f', 'Initiative_ID'],
  [1, 'f', 'KPI_ID'], [1, 'f', 'KPI_Name'], [1, 'f', 'KPI_Value', 'sum'], [1, 'x', 'Month', 'cal'],
  [2, 'x', 'Date Hierarchy', 'hier'], [3, 'f', 'Year'], [3, 'f', 'Quarter'], [3, 'f', 'Month', 'cal'], [3, 'f', 'Day'],
  [0, 't', 'Stakeholders', 'r'], [0, 't', 'sys database_firewall_rules', 'r'], [0, 't', 'Table', 'd'],
  [1, 'f', 'Column1'], [0, 't', 'Training_Modules', 'r']
];
const use = id => `<svg width="12" height="${id === 'hier' ? 15 : 12}"><use href="#${id}"/></svg>`;
const badge = '<svg class="badge" width="12" height="12"><circle cx="6" cy="6" r="6" fill="#187a66"/><path d="m3.500 6 2 2 3-3.500" fill="none" stroke="#fff" stroke-width="1.300"/></svg>';
const tick = '<svg class="ck y" viewBox="0 0 12 12"><rect width="12" height="12" rx="1" fill="#187a66"/><path d="m2 6 2.800 2.800L10 3.500" fill="none" stroke="#fff" stroke-width="1.200"/></svg>';
document.getElementById('tree').innerHTML = nodes.map(([lv, kind, label, icon, on]) => {
  if (kind === 't') {
    return `<div class="node" style="padding-left:7px"><span class="cv">${use('chev-' + icon)}</span><span class="tb">${use('tbl')}${on ? badge : ''}</span>${label}</div>`;
  }
  const chev = kind === 'x' ? `<span class="cv">${use('chev-d')}</span>` : '';
  const pad = 38 + (lv - 1) * 15 - (chev ? 16 : 0);
  return `<div class="node" style="padding-left:${pad}px">${chev}${on ? tick : '<i class="ck"></i>'}<span class="ic">${icon ? use(icon) : ''}</span>${label}</div>`;
}).join('');

// Gallery of visual types, 18x18 each
const K = '#333', B = '#1f5fb0', F = '#83bbec', G = '#c8c6c4';
const p = (d, f = 'none', s = K, w = 1.2) => `<path d="${d}" fill="${f}" stroke="${s}" stroke-width="${w}"/>`;
const axis = p('M.6 0v17.400H18');
const grid = p('M.6.6h17v17H.6z', '#fff') + p('M.6 3h17', 'none', '#aaa', 3) + p('M.6 5h17M.6 9.500h17M.6 13.500h17M6 5v12.500M12 5v12.500', 'none', K, .8);
const visuals = [
  axis + p('M1 2.500h5v4H1z', '#fff', '#666') + p('M6 2.500h6v4H6z', F, B) + p('M1 10.500h7v4H1z', '#fff', '#666') + p('M8 10.500h7v4H8z', G, '#888'),
  axis + p('M3.500 12h4v5h-4zM12 10h4v7h-4z', '#fff', '#666') + p('M3.500 5.500h4V12h-4z', F, B) + p('M12 2h4v8h-4z', G, '#888'),
  p('M1 1h17v4H1z', F, B) + p('M1 5h10v3.500H1zM1 12.500h12v4H1z', '#fff', '#777') + p('M1 8.500h7v3.500H1z', G, '#777') + axis,
  p('M1 1h4v16H1z', F, B) + p('M5 7h3.500v10H5zM13 5h4v12h-4z', G, '#777') + p('M8.500 10h4v7h-4z', '#fff', '#777') + axis,
  axis + p('M1 2.500h4v4H1z', '#fff', '#666') + p('M5 2.500h11v4H5z', F, B) + p('M1 10.500h8v4H1z', '#fff', '#666') + p('M9 10.500h7v4H9z', G, '#888'),
  axis + p('M3.500 14h4v3h-4zM12 10h4v7h-4z', '#fff', '#666') + p('M3.500 2h4v12h-4z', F, B) + p('M12 2h4v6h-4z', G, '#888'),
  axis + p('M1 13 6 7l4 3 7-6', 'none', '#3b93d6') + p('m1 11 5-6 5 5 3-5 4 4'),
  p('M9 17 14 1l4 6v10z', G, '#777') + p('m1 14 6-12 6 9 0 6H1z', '#fff') + p('m1 17 4-4 4 3 3-7 6 8z', F, B) + axis,
  p('m1 5 4 4 5-6 3 3 5-3v10l-5-2-3 3-5-5-4 4z', F, B) + axis,
  p('M4 2h4v9H4z', F, B) + p('M4 11h4v6H4zM12 10h4v7h-4z', '#fff', '#666') + p('M12 2h4v8h-4z', G, '#888') + p('m1 13 4-4 4 4 8-6') + axis,
  p('M3 9h4v8H3z', F, B) + p('M7 2h4v15H7z', '#fff') + p('M13 5h4v12h-4z', G, '#777') + p('m1 14 5-4 4 4 8-7') + axis,
  p('M1 4h4l4 4 4-4h4v10h-4l-4-3-4 3H1z', '#ee9b45', '#dd7a1c') + p('M1 2q4 0 5 4t7 0q1-3 4-4v5q-3 1-4 5t-8 0-4-6z', F, B) + axis,
  axis + p('M3 5h3v12H3zM6 4h4v8H8M8 5h3v9M11 1h3v13h-3M14 2h3v15h-3', 'none', '#555'),
  p('M.6 2h17v5H.6z', F, B) + p('M3.500 7h11v5h-11z', F, B) + p('M6.500 12h5v5h-5z', F, B),
  axis + '<path d="M4 4h3v3H4zM9 7h3v3H9zM14 10h3v3h-3z" fill="#83bbec"/><path d="M13 1h3v3h-3zM3 12h3v3H3z" fill="#333"/>',
  '<circle cx="9" cy="9" r="8.300" fill="#fff" stroke="#333"/>' + p('M9 9V.7A8.300 8.300 0 0 1 15.500 14z', F, B),
  '<circle cx="9" cy="9" r="6" fill="none" stroke="#1f5fb0" stroke-width="6"/><circle cx="9" cy="9" r="6" fill="none" stroke="#83bbec" stroke-width="4.200"/><path d="M3 9a6 6 0 0 1 6-6" fill="none" stroke="#fff" stroke-width="4.200"/>',
  p('M.6.6h17v17H.6z', '#fff') + p('M.6.6h8v17h-8zM.6 9h8', F, B) + p('M8.600 6h9M8.600 11h5v6.500M13.500 11h4V6'),
  '<circle cx="10" cy="7" r="6" fill="#fff" stroke="#444" stroke-width="1.200"/><path d="M6 4q3 0 3 3t3 4q-5 2-7-3zM11 2q5 2 4 6l-3-1z" fill="#2f9e50"/>' + p('M5 1q-6 9 1 13 5 2 9-1M9 15v2M5 17.500h9'),
  p('m1 2 6 1 4 4-3 3H1z', F, B) + p('M9 2h9v7l-5 3-5-4 3-3z', G, '#777') + p('m1 10 7 1 2 6-5 1z', G, '#777') + p('m9 12 8-2-1 5-5 3z', F, B),
  '<path d="M10 0 2 18l8-6z" fill="#4ab4e6"/><path d="m10 0 7 18-7-6z" fill="#2270b8"/>',
  p('M.7 13a8.300 8.300 0 0 1 16.600 0h-4.500a4 4 0 0 0-7.600 0z', '#fff', '#555') + p('M5.500 5.500A8.300 8.300 0 0 1 17.300 13h-4.500A4 4 0 0 0 8 9.500z', F, B) + p('m9 13-3-6'),
  p('M.6 2.600h17v12H.6z', '#fff') + '<text class="num" x="1" y="12.500" textLength="16">123</text>',
  p('M.6.6h17v17H.6z', '#fff') + p('M3 3v12', 'none', '#999') + p('M5 5h9M5 13h7') + p('M5 7h6M5 10.500h10', 'none', B, 2),
  p('M.6 2.600h17v12H.6z', '#fff') + p('m3 11 2.500-5L8 11z', '#4caf68', '#2f8e4a', .8) + p('m10 6h5l-2.500 5z', '#e2504c', '#c22', .8),
  p('M.6.6h17v17H.6z', '#fff') + p('M.6 3h17', 'none', '#aaa', 2.500) + p('M3 6.500h3v3H3zM3 12h3v3H3z', G, '#777') + p('M8 8h10l-3.500 4.500V18h-3v-5.500z', '#fff', '#222'),
  grid,
  grid + '<path d="M12 5h5.500v12.500H6V10h6z" fill="#5ea6e6"/>' + p('M.6 9.500h17M.6 13.500h17M6 5v12.500M12 5v12.500', 'none', B, .8),
  '<text x="3" y="15">R</text>',
  '<text x="-1" y="14" textLength="19" lengthAdjust="spacingAndGlyphs">Py</text>',
  axis + p('M1 3h11M1 8h8M1 13h5', 'none', '#777') + '<circle cx="15" cy="3" r="2.500" fill="#4a98dc"/><circle cx="11" cy="8" r="1.700" fill="#fff" stroke="#777"/><circle cx="7" cy="13" r="1.700" fill="#fff" stroke="#777"/>',
  p('M6 9h3M9 9V3h3M9 9h3M9 9v6h3') + p('M0 6.500h6v5H0zM12 1h6v4h-6zM12 7h6v4h-6zM12 13h6v4h-6z', F, B),
  p('M.7 2h17v10.500H8L4.500 17v-4.500H.7z', '#fff', B),
  p('M4 3V.6h8l4.500 4.500v12.500H4V10M12 .6V5h4.500', '#fff') + p('M5 10h7M8 13.500h5', 'none', B) + '<circle cx="3" cy="6.500" r="2.500" fill="#3b93d6"/>',
  p('M4 1h10v6q0 5-5 5T4 7zM4 3H.7q0 5 4 5.500M14 3h3.300q0 5-4 5.500M9 12v3') + p('M4.500 1h9v2h-9zM5 15h8v2.500H5z', F, B),
  p('M2.600.6h9l5 5v12h-14zM11.500.6V6h5', '#fff') + p('M6 16v-6M9.500 16v-3M13 16V9', 'none', '#222', 2),
  p('M.6 4.600h17v12H.6z', '#fff') + '<text class="num" x="5" y="14.500" textLength="12">123</text>' + p('M2-.5h5L5 4h3L1 11l2-5H0z', '#f8dc8f', '#e07b16'),
  p('M7 1h10.500v7L14 9l-3 2v6H1v-6', '#cfe4f7', B) + p('M7 6q6 0 4 5l-2 6', 'none', F, 3) + '<path d="M0-1h6v6L3 9 0 5z" fill="#dd7a1c"/><circle cx="16" cy="16" r="2.500" fill="#dd7a1c"/><circle cx="16" cy="10" r="1.300" fill="#dd7a1c"/>',
  p('m9 .8 8.200 8.200L9 17.200.8 9z', '#f3e4f6', '#9b2fae', 1.5) + p('m5 5 4 4 4-4M5 13l4-4 4 4', 'none', '#9b2fae', 1.5),
  p('M1 3h10l6 6-6 6H1l6-6z', '#e6f1fb', '#2767c8', 1.4) + p('m3 5 9 6M7 3l8 5M5 12l4 3', 'none', '#2767c8'),
  '<g fill="#333"><circle cx="3" cy="8" r="1.200"/><circle cx="9" cy="8" r="1.200"/><circle cx="15" cy="8" r="1.200"/></g>'
];
document.getElementById('gallery').innerHTML = visuals.map((v, i) => `<span${i === 25 ? ' class="sel"' : ''}><svg viewBox="0 0 18 18">${v}</svg></span>`).join('');
```
